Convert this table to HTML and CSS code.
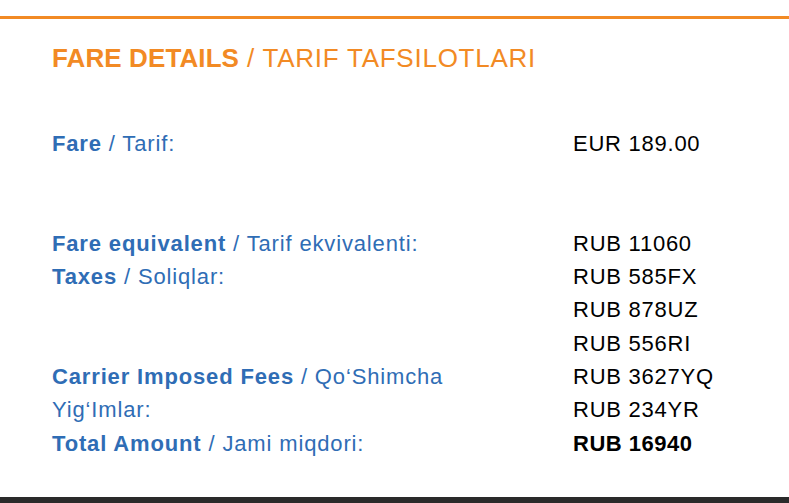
FILE: index.html
```html
<!DOCTYPE html>
<html lang="en">
<head>
<meta charset="utf-8">
<title>Fare Details</title>
<link rel="stylesheet" href="styles.css">
</head>
<body>
<div class="page">
  <section class="fare">
    <h2 class="fare-title"><b>FARE DETAILS</b> / TARIF TAFSILOTLARI</h2>
    <div class="fare-grid">
      <div class="lbl"><b>Fare</b> / Tarif:</div>
      <div class="val">EUR 189.00</div>
      <div class="lbl blank">&nbsp;</div>
      <div class="val blank">&nbsp;</div>
      <div class="lbl blank">&nbsp;</div>
      <div class="val blank">&nbsp;</div>
      <div class="lbl"><b>Fare equivalent</b> / Tarif ekvivalenti:</div>
      <div class="val">RUB 11060</div>
      <div class="lbl"><b>Taxes</b> / Soliqlar:</div>
      <div class="val">RUB 585FX<br>RUB 878UZ<br>RUB 556RI</div>
      <div class="lbl"><b>Carrier Imposed Fees</b> / Qo‘Shimcha Yig‘Imlar:</div>
      <div class="val">RUB 3627YQ<br>RUB 234YR</div>
      <div class="lbl"><b>Total Amount</b> / Jami miqdori:</div>
      <div class="val total">RUB 16940</div>
    </div>
  </section>
  <div class="bottom-bar"></div>
</div>
</body>
</html>
```
FILE: styles.css
```css
html, body {
  margin: 0;
  padding: 0;
  background: #ffffff;
}
body {
  font-family: "Liberation Sans", Arial, sans-serif;
}
.page {
  min-height: 100vh;
  display: flex;
  flex-direction: column;
}
.fare {
  margin-top: 16px;
  border-top: 3px solid #f28a24;
  padding: 24px 0 0 52px;
}
.fare-title {
  margin: 0;
  font-size: 26px;
  line-height: 30px;
  font-weight: normal;
  color: #f28a24;
  letter-spacing: 0.75px;
}
.fare-title b {
  font-weight: bold;
  letter-spacing: 0.1px;
}
.fare-grid {
  margin-top: 54px;
  display: grid;
  grid-template-columns: 420px 1fr;
  column-gap: 101px;
  font-size: 22px;
  line-height: 33.3px;
}
.lbl {
  color: #2f6db5;
  letter-spacing: 0.85px;
}
.lbl b {
  font-weight: bold;
}
.val {
  color: #000000;
  letter-spacing: 0.75px;
}
.val.total {
  font-weight: bold;
  letter-spacing: 0.5px;
}
.bottom-bar {
  margin-top: auto;
  height: 6px;
  background: #2a2a2a;
}
```
